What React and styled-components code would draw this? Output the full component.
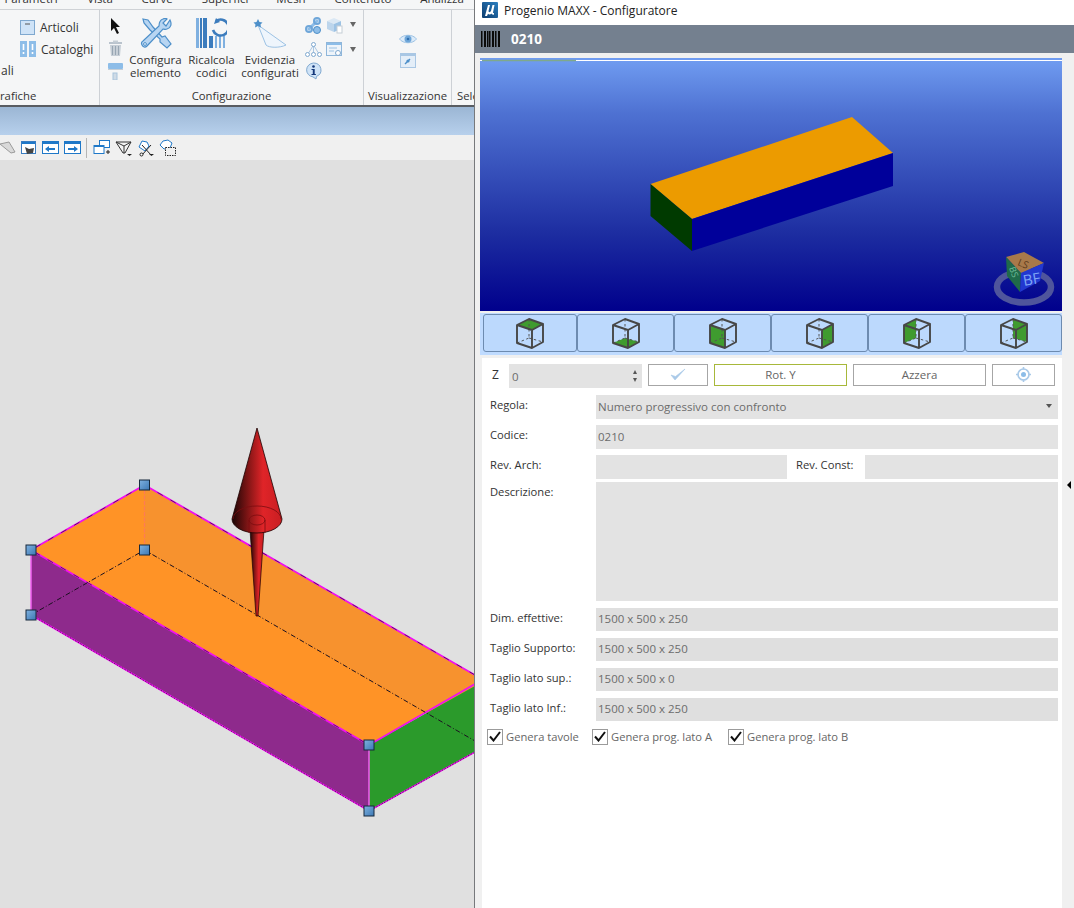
import React from 'react';
import styled, { createGlobalStyle } from 'styled-components';

const GlobalStyle = createGlobalStyle`
  html, body { margin: 0; padding: 0; background: #f0f0f0; }
  body { font-family: 'Open Sans', 'Liberation Sans', sans-serif; }
  * { box-sizing: border-box; }
`;

const Page = styled.div`
  display: flex;
  width: 1074px;
  height: 908px;
  overflow: hidden;
`;

/* ---------- left: CAD window ---------- */
const CadWindow = styled.div`
  width: 475px;
  height: 100%;
  display: flex;
  flex-direction: column;
  border-right: 1px solid #77797c;
  overflow: hidden;
`;

const MenuClip = styled.div`
  height: 10px;
  flex: none;
  overflow: hidden;
  background: #f5f6f7;
  border-bottom: 1px solid #cfd2d6;
`;

const Menu = styled.div`
  display: grid;
  grid-template-columns: 62px 76px 38px 98px 34px 110px 48px;
  margin-top: -9px;
  font-size: 11.5px;
  line-height: 16px;
  color: #333;
  text-align: center;
`;

const Ribbon = styled.div`
  height: 97px;
  flex: none;
  display: flex;
  background: #f5f6f7;
  border-bottom: 2px solid #585c62;
`;

const Group = styled.div`
  flex: none;
  width: ${(p) => p.$w}px;
  display: flex;
  flex-direction: column;
  border-right: 1px solid #cdd1d6;
`;

const GroupBody = styled.div`
  flex: 1;
  min-height: 0;
  display: flex;
  gap: ${(p) => p.$gap || 0}px;
  padding: ${(p) => p.$pad || '7px 0 0 8px'};
`;

const GroupLabel = styled.div`
  height: 17px;
  flex: none;
  padding-left: ${(p) => p.$left || 0}px;
  font-size: 11.3px;
  line-height: 15px;
  color: #333;
  text-align: ${(p) => p.$align || 'center'};
  white-space: nowrap;
  overflow: hidden;
`;

const CatalogList = styled.div`
  display: flex;
  flex-direction: column;
  font-size: 12px;
  color: #333;
  width: 100%;
`;

const CatalogRow = styled.div`
  height: 21.5px;
  display: flex;
  align-items: center;
  gap: 5px;
  padding-left: ${(p) => p.$left || 20}px;
`;

const ToolColumn = styled.div`
  width: 15px;
  flex: none;
  display: flex;
  flex-direction: column;
  gap: 5px;
`;

const BigButton = styled.div`
  width: ${(p) => p.$w}px;
  flex: none;
  display: flex;
  flex-direction: column;
  align-items: center;
  padding-top: 1px;
  font-size: 11.5px;
  line-height: 12.5px;
  color: #333;
  text-align: center;
  white-space: nowrap;

  svg { margin-bottom: 5px; }
`;

const SmallTools = styled.div`
  display: grid;
  grid-template-columns: 17px 17px 10px;
  grid-template-rows: 25px 20px 18px;
  column-gap: 4px;
  align-items: start;
`;

const SmallCaret = styled.span`
  justify-self: start;
  margin: 5px 0 0 3px;
  width: 0;
  height: 0;
  border-left: 3.5px solid transparent;
  border-right: 3.5px solid transparent;
  border-top: 5px solid #666;
`;

const ViewColumn = styled.div`
  width: 100%;
  display: flex;
  flex-direction: column;
  align-items: center;
  gap: 8px;
  padding-top: 23px;
`;

const BlueBand = styled.div`
  height: 28px;
  flex: none;
  background: linear-gradient(#9bb6d4, #b7d0ec);
`;

const ToolBar = styled.div`
  height: 25px;
  flex: none;
  display: flex;
  align-items: center;
  gap: 5px;
  background: #f0f0f0;
`;

const ToolSep = styled.span`
  width: 1px;
  height: 20px;
  margin-right: 1px;
  background: #b5b5b5;
`;

const Canvas = styled.div`
  flex: 1;
  min-height: 0;
  background: #e0e0e0;

  svg { display: block; }
`;

/* ---------- right: configurator ---------- */
const ConfigWindow = styled.div`
  flex: 1;
  min-width: 0;
  display: flex;
  flex-direction: column;
  background: #f0f0f0;
`;

const TitleBar = styled.div`
  height: 25px;
  flex: none;
  display: flex;
  align-items: center;
  gap: 6px;
  padding: 0 0 5px 7px;
  background: #fff;
  font-size: 12px;
  color: #222;
`;

const CodeBar = styled.div`
  height: 28px;
  flex: none;
  display: flex;
  align-items: center;
  gap: 10px;
  padding-left: 6px;
  background: #74808f;
  color: #fff;
  font-size: 13.5px;
  font-weight: 700;
`;

const ConfigBody = styled.div`
  flex: 1;
  min-height: 0;
  display: flex;
  padding-left: 5px;
`;

const MainColumn = styled.div`
  width: 582px;
  display: flex;
  flex-direction: column;
  padding-top: 5px;
`;

const Viewport = styled.div`
  height: 253px;
  flex: none;
  background: linear-gradient(#6f9bf0 1%, #4e71d2 22%, #1c2ca0 70%, #00008c 100%);

  svg { display: block; }
`;

const ViewButtons = styled.div`
  height: 42px;
  flex: none;
  margin-top: 2px;
  padding: 1px 1px 3px 3px;
  display: grid;
  grid-template-columns: 94px repeat(5, 97px);
  background: #bfdbff;
`;

const ViewButton = styled.div`
  display: flex;
  align-items: center;
  justify-content: center;
  border: 1px solid #6d8bb0;
  border-radius: 3px;
  background: #bcd9fd;
`;

const Form = styled.div`
  flex: 1;
  min-height: 0;
  margin: 3px 0 0 2px;
  padding: 6px 4px 0 8px;
  display: flex;
  flex-direction: column;
  background: #fff;
  font-size: 11px;
  color: #333;
`;

const FormRow = styled.div`
  display: grid;
  grid-template-columns: ${(p) => p.$cols || '106px 1fr'};
  margin-top: ${(p) => p.$top}px;
  height: ${(p) => p.$h}px;
`;

const TopRow = styled.div`
  display: flex;
  height: 24px;
`;

const ZLabel = styled.div`
  width: 19px;
  flex: none;
  padding: 2px 0 0 2px;
  font-size: 12px;
`;

const Field = styled.div`
  display: flex;
  align-items: ${(p) => (p.$tall ? 'flex-start' : 'center')};
  justify-content: space-between;
  padding: 0 3px 2px 2px;
  background: ${(p) => p.$bg || '#e3e3e3'};
  color: #6c6c6c;
  font-size: 11.5px;
  white-space: nowrap;
`;

const Spinner = styled(Field)`
  width: 133px;
  flex: none;
  padding: 0 5px 0 3px;
  margin-right: 6px;
`;

const SpinArrows = styled.span`
  display: flex;
  flex-direction: column;
  gap: 4px;

  i {
    width: 0;
    height: 0;
    border-left: 2.5px solid transparent;
    border-right: 2.5px solid transparent;
  }
  i:first-child { border-bottom: 4px solid #555; }
  i:last-child { border-top: 4px solid #555; }
`;

const ActionButton = styled.div`
  width: ${(p) => p.$w}px;
  flex: none;
  height: 22px;
  margin-right: 6px;
  padding-bottom: 1px;
  display: flex;
  align-items: center;
  justify-content: center;
  background: #fff;
  border: 1px solid ${(p) => (p.$active ? '#a7b83a' : '#a6a6a6')};
  color: #666;
  font-size: 11.5px;
`;

const SelectCaret = styled.span`
  margin-right: 3px;
  width: 0;
  height: 0;
  border-left: 3px solid transparent;
  border-right: 3px solid transparent;
  border-top: 4px solid #555;
`;

const Label = styled.div`
  padding: 1px 0 0 ${(p) => p.$left || 0}px;
  font-size: 11.2px;
  line-height: 18px;
  white-space: nowrap;
`;

const CheckRow = styled.div`
  display: flex;
  margin: 7px 0 0 -3px;
  height: 17px;
`;

const CheckItem = styled.div`
  width: ${(p) => p.$w}px;
  flex: none;
  display: flex;
  align-items: center;
  gap: 3px;
  color: #666;
  font-size: 11.2px;
  white-space: nowrap;
`;

const CheckBox = styled.span`
  width: 16px;
  height: 16px;
  flex: none;
  display: flex;
  align-items: center;
  justify-content: center;
  background: #fff;
  border: 1px solid #9b9b9b;
`;

const SideStrip = styled.div`
  flex: 1;
  padding: 428px 0 0 5px;
`;

const SplitterMark = styled.span`
  display: block;
  width: 0;
  height: 0;
  border-top: 4px solid transparent;
  border-bottom: 4px solid transparent;
  border-right: 4px solid #000;
`;

/* ---------- icons ---------- */
const IconSvg = styled.svg`
  flex: none;
`;

const Svg = ({ w, h, children }) => (
  <IconSvg width={w} height={h} viewBox={`0 0 ${w} ${h}`}>
    {children}
  </IconSvg>
);

const ArticoliIcon = () => (
  <Svg w={15} h={15}>
    <rect x="0.5" y="0.5" width="14" height="14" fill="#cfe3f7" stroke="#7fa8cf" />
    <path d="M5 4h5" stroke="#555" />
  </Svg>
);

const CataloghiIcon = () => (
  <Svg w={16} h={16}>
    <rect x="0" y="0" width="7" height="16" fill="#8dbde8" />
    <rect x="9" y="0" width="7" height="16" fill="#8dbde8" />
    <path d="M3.5 3v6M12.5 3v6" stroke="#fff" strokeWidth="1.6" />
    <path d="M3.5 11v2M12.5 11v2" stroke="#fff" strokeWidth="1.6" />
  </Svg>
);

const PointerIcon = () => (
  <Svg w={15} h={18}>
    <path d="M3 1l0 13 3-3 3 6 2-1-3-6h4z" fill="#111" />
  </Svg>
);

const TrashIcon = () => (
  <Svg w={15} h={17}>
    <rect x="1" y="2" width="13" height="2" fill="#b9c3cd" />
    <rect x="5" y="0.5" width="5" height="2" fill="#c5ced6" />
    <path d="M2 5h11l-1 11H3z" fill="#c6ced6" />
    <path d="M4.5 6v9M7.5 6v9M10.5 6v9" stroke="#98a6b3" />
  </Svg>
);

const RollerIcon = () => (
  <Svg w={15} h={18}>
    <rect x="0" y="1" width="15" height="6" rx="1" fill="#8dbde8" />
    <path d="M0 7h15v1H0z" fill="#c5ced6" />
    <rect x="5" y="11" width="4" height="7" fill="#cfdbe6" stroke="#a8c3dc" />
  </Svg>
);

const WrenchIcon = () => (
  <Svg w={32} h={31}>
    <path d="M3 1l5 1 5 7 9 10 3-1 6 8-4 4-7-6 0-3-10-9-6-7z" fill="#b7d5f2" stroke="#4d8fc9" strokeWidth="1.2" />
    <path d="M30 2c2 4 1 8-3 9-2 1-3 0-4 0L7 28c-2 2-4 1-5-1s-1-3 1-4l16-15c0-3 1-6 4-7 2-1 3-1 4 0l-4 4 3 3z" fill="#b7d5f2" stroke="#4d8fc9" strokeWidth="1.2" />
    <circle cx="5" cy="26" r="1.4" fill="#fff" stroke="#4d8fc9" />
  </Svg>
);

const RicalcolaIcon = () => (
  <Svg w={31} h={31}>
    <rect x="0" y="0" width="3" height="30" fill="#7fb0e0" />
    <rect x="4" y="0" width="2" height="30" fill="#3c7cbd" />
    <rect x="7" y="0" width="4" height="30" fill="#3c7cbd" />
    <rect x="13" y="18" width="4" height="12" fill="#3c7cbd" />
    <rect x="19" y="18" width="2" height="12" fill="#7fb0e0" />
    <rect x="23" y="18" width="2" height="12" fill="#7fb0e0" />
    <rect x="27" y="18" width="2" height="12" fill="#7fb0e0" />
    <path d="M15 12a8 8 0 1 0 3-9" fill="none" stroke="#3c7cbd" strokeWidth="2.6" transform="translate(2 0)" />
    <path d="M20 0l4 4-6 2z" fill="#3c7cbd" />
  </Svg>
);

const EvidenziaIcon = () => (
  <Svg w={34} h={31}>
    <path d="M5 7l28 20c-6 3-17 3-20 0z" fill="#eef5fc" stroke="#9cc2e4" />
    <path d="M5 1l1.500 3 3 .5-2 2 .5 3-3-1.500-3 1.500.5-3-2-2 3-.5z" fill="#4d8fc9" />
  </Svg>
);

const LinkIcon = () => (
  <Svg w={17} h={17}>
    <path d="M3 13L13 3" stroke="#8dbde8" strokeWidth="3" />
    <circle cx="4" cy="12" r="3" fill="none" stroke="#6ea6d9" strokeWidth="2" />
    <circle cx="12" cy="4" r="3" fill="none" stroke="#6ea6d9" strokeWidth="2" />
    <circle cx="12" cy="13" r="3.5" fill="#8dbde8" stroke="#4d8fc9" />
  </Svg>
);

const SolidIcon = () => (
  <Svg w={17} h={17}>
    <path d="M1 4l7-3 7 3-7 3z" fill="#dbe8f4" />
    <path d="M1 4l7 3v8l-7-3z" fill="#bcd5ec" />
    <path d="M8 7l7-3v8l-7 3z" fill="#9cc2e4" />
    <rect x="11" y="9" width="5" height="7" fill="#fff" stroke="#c5ced6" />
  </Svg>
);

const TreeIcon = () => (
  <Svg w={17} h={15}>
    <path d="M8.5 3L3 12M8.5 3v9M8.5 3L14 12" stroke="#a9c7e4" fill="none" />
    <circle cx="8.5" cy="2.5" r="2" fill="#fff" stroke="#7fa8cf" />
    <circle cx="2.5" cy="12.5" r="2" fill="#fff" stroke="#7fa8cf" />
    <circle cx="8.5" cy="12.5" r="2" fill="#fff" stroke="#7fa8cf" />
    <circle cx="14.5" cy="12.5" r="2" fill="#fff" stroke="#7fa8cf" />
  </Svg>
);

const FormIcon = () => (
  <Svg w={17} h={15}>
    <rect x="0.5" y="0.5" width="15" height="13" fill="#eef4fa" stroke="#8fb6da" />
    <rect x="1" y="1" width="14" height="2" fill="#8dbde8" />
    <path d="M3 6h8M3 9h5" stroke="#9cc2e4" />
    <circle cx="12" cy="11" r="2.5" fill="#fff" stroke="#7fa8cf" />
  </Svg>
);

const InfoIcon = () => (
  <Svg w={17} h={18}>
    <path d="M8.5 1a7.500 7 0 0 1 3 13.400L11 17l-3-2.100A7.500 7 0 0 1 8.500 1z" fill="#cfe3f7" stroke="#7fa8cf" />
    <circle cx="8.500" cy="4.500" r="1.300" fill="#14387a" />
    <path d="M6.500 7h3.200v5h1.200v1H6.500v-1h1.300V8H6.500z" fill="#14387a" />
  </Svg>
);

const EyeIcon = () => (
  <Svg w={18} h={12}>
    <path d="M0.500 6C4 1 14 1 17.500 6 14 11 4 11 0.500 6z" fill="#dcebf9" stroke="#9cc2e4" />
    <circle cx="9" cy="6" r="3.500" fill="#6ea6d9" />
    <circle cx="9" cy="6" r="1.300" fill="#2f6fb0" />
  </Svg>
);

const WindowIcon = () => (
  <Svg w={16} h={15}>
    <rect x="0.500" y="0.500" width="15" height="14" fill="#e4eef8" stroke="#a9c7e4" />
    <rect x="1" y="1" width="14" height="2" fill="#a9c7e4" />
    <path d="M5 11l5-5" stroke="#4d8fc9" strokeWidth="1.500" />
    <circle cx="8" cy="8" r="1.600" fill="#4d8fc9" />
  </Svg>
);

const PlaneIcon = () => (
  <Svg w={16} h={14}>
    <path d="M0 3l9-2 6 10-4 1z" fill="#d9d9d9" stroke="#9a9a9a" />
  </Svg>
);

const ViewWindowIcon = () => (
  <Svg w={16} h={16}>
    <rect x="0.500" y="1.500" width="14" height="12" fill="#fff" stroke="#3a7dc2" />
    <rect x="1" y="2" width="13" height="2" fill="#1f78c8" />
    <path d="M4 7l4 2 5-1-1 5-6 1z" fill="#444" />
  </Svg>
);

const StepIcon = ({ left }) => (
  <Svg w={17} h={13}>
    <rect x="0.500" y="0.500" width="16" height="12" fill="#fff" stroke="#1f78c8" />
    <rect x="1" y="1" width="15" height="2" fill="#1f78c8" />
    <path d={left ? 'M3 8l4-3v2h6v2H7v2z' : 'M14 8l-4-3v2H4v2h6v2z'} fill="#1f78c8" />
  </Svg>
);

const FramesIcon = () => (
  <Svg w={17} h={17}>
    <rect x="6.500" y="1.500" width="10" height="7" fill="#fff" stroke="#1f78c8" />
    <rect x="1" y="6.500" width="10" height="8" fill="#fff" stroke="#1f78c8" />
    <rect x="1" y="6" width="10" height="2" fill="#1f78c8" />
    <path d="M13 13h4M15 11v4" stroke="#222" />
  </Svg>
);

const FunnelIcon = () => (
  <Svg w={17} h={18}>
    <path d="M1 3l15 0-6 11-2 0z" fill="#f3f3f3" stroke="#333" />
    <path d="M1 3l8 4 7-4M9 7l0 7" fill="none" stroke="#333" />
    <path d="M12 15h5l-2.500 2z" fill="#222" />
  </Svg>
);

const CutIcon = () => (
  <Svg w={17} h={18}>
    <path d="M2 8l3-6 5 1 2 4-4 5z" fill="#fff" stroke="#1f78c8" />
    <path d="M5 16L14 6M14 16L5 6" stroke="#222" />
    <circle cx="4.500" cy="15.500" r="1.500" fill="#fff" stroke="#222" />
    <path d="M12 15h5l-2.500 2z" fill="#222" />
  </Svg>
);

const SelectBoxIcon = () => (
  <Svg w={17} h={18}>
    <path d="M1 6l3-4 5-1 4 3-2 5-6 1z" fill="#fff" stroke="#1f78c8" />
    <rect x="6.500" y="8.500" width="10" height="8" fill="#f0f0f0" stroke="#222" strokeDasharray="1.500 1" />
  </Svg>
);

const LogoIcon = () => (
  <IconSvg width="16" height="16" viewBox="0 0 16 16">
    <defs>
      <linearGradient id="logo" x1="0" y1="1" x2="1" y2="0">
        <stop offset="0" stopColor="#0d3c6e" />
        <stop offset="1" stopColor="#2b7fc0" />
      </linearGradient>
    </defs>
    <rect width="16" height="16" rx="1" fill="url(#logo)" />
    <path d="M3 14L6 3h2L6.500 9c0 1.500 1.800 1.500 2.500 0L10.500 3h2l-1.500 7.500c0 .7.500.7 1 .5v1.500c-1.200.5-2.300 0-2.500-1-1 1.200-2.700 1.200-3.500.3L5 14z" fill="#fff" />
  </IconSvg>
);

const BarcodeIcon = () => (
  <Svg w={20} h={16}>
    {[0, 3, 6, 8, 11, 14, 17].map((x) => (
      <rect key={x} x={x} y="0" width={x % 2 ? 2 : 1.500} height="16" fill="#0a0a0a" />
    ))}
  </Svg>
);

// cube corners used by the six view buttons
const C = {
  tl: '2,7', tb: '14,1', tr: '28,6', tf: '17,12',
  bl: '2,25', bf: '17,30', br: '28,24', bk: '14,20',
};
const FACES = {
  top: [C.tl, C.tb, C.tr, C.tf],
  bottom: [C.bl, C.bk, C.br, C.bf],
  front: [C.tl, C.tf, C.bf, C.bl],
  right: [C.tf, C.tr, C.br, C.bf],
  backLeft: [C.tl, C.tb, C.bk, C.bl],
  backRight: [C.tb, C.tr, C.br, C.bk],
};

const CubeIcon = ({ face }) => (
  <Svg w={30} h={31}>
    <polygon points={FACES[face].join(' ')} fill="#3f9b2f" />
    <path d="M14 1v19M2 25l12-5M14 20l14 4" fill="none" stroke="#555" strokeDasharray="2.500 2.500" />
    <path d="M2 7L14 1l14 5-11 6zM2 7v18l15 5 11-6V6M17 12v18" fill="none" stroke="#474747" strokeWidth="1.900" strokeLinejoin="round" />
  </Svg>
);

const TargetIcon = () => (
  <Svg w={15} h={15}>
    <circle cx="7.500" cy="7.500" r="5.500" fill="none" stroke="#a9c9e8" strokeWidth="1.600" />
    <circle cx="7.500" cy="7.500" r="2.500" fill="#8dbde8" />
    <path d="M7.500 0v2.500M7.500 12.500V15M0 7.500h2.500M12.500 7.500H15" stroke="#a9c9e8" strokeWidth="1.600" />
  </Svg>
);

const TickIcon = () => (
  <Svg w={16} h={13}>
    <path d="M1 7l4 5L15 1 5.500 8.500z" fill="#a9c9e8" stroke="#a9c9e8" strokeWidth="0.600" />
  </Svg>
);

const CheckMark = () => (
  <Svg w={12} h={11}>
    <path d="M1 5.500l3.500 4L11 1" fill="none" stroke="#111" strokeWidth="2" />
  </Svg>
);

/* ---------- drawings ---------- */
const Scene = () => (
  <svg width="582" height="253" viewBox="480 58 582 253">
    <path d="M480 60.500h582" stroke="#fff" />
    <path d="M482 60.500h94" stroke="#7fa98a" strokeWidth="1.500" />
    <polygon points="650.500,184 852,117 893,153 692,219" fill="#ec9b00" />
    <polygon points="692,219 893,153 893,186 692,251" fill="#00009a" />
    <polygon points="650.500,184 692,219 692,251 650.500,216" fill="#003a00" />
    <ellipse cx="1024" cy="287" rx="27" ry="15.500" fill="none" stroke="#4f559c" strokeWidth="6.500" />
    <polygon points="1006,257 1024,252 1044,263 1021,273" fill="#a8794a" />
    <polygon points="1006,257 1021,273 1020,292 1007,276" fill="#1f6a4a" />
    <polygon points="1021,273 1044,263 1040,281 1020,292" fill="#2238d0" />
    <text x="1024" y="286" fontSize="15" fill="#7fa5f5" fontFamily="'Open Sans', sans-serif" transform="rotate(-10 1024 286)">BF</text>
    <text x="1017" y="265" fontSize="10" fill="#5b3a1c" fontFamily="'Open Sans', sans-serif" transform="rotate(22 1017 265)">LS</text>
    <text x="1009" y="268" fontSize="9" fill="#6fbf9a" fontFamily="'Open Sans', sans-serif" transform="rotate(70 1009 268)">BS</text>
  </svg>
);

const Handle = ({ x, y }) => (
  <rect x={x - 5} y={y - 5} width="10" height="10" fill="url(#handle)" stroke="#16293d" />
);

const CadDrawing = () => (
  <svg width="474" height="748" viewBox="0 160 474 748">
    <defs>
      <linearGradient id="cone" x1="0" y1="0" x2="1" y2="0">
        <stop offset="0" stopColor="#1a0505" />
        <stop offset="0.3" stopColor="#7a1414" />
        <stop offset="0.62" stopColor="#e02428" />
        <stop offset="1" stopColor="#c81e22" />
      </linearGradient>
      <linearGradient id="handle" x1="0" y1="0" x2="1" y2="1">
        <stop offset="0" stopColor="#7fb2e0" />
        <stop offset="1" stopColor="#3c78b4" />
      </linearGradient>
    </defs>
    <polygon points="144.500,485 31,550 369,745 483,680" fill="#ff9326" />
    <polygon points="144.500,485 144.500,550 483,745 483,680" fill="#f7922e" />
    <polygon points="31,550 369,745 369,811 31,615" fill="#8e2a8c" />
    <polygon points="369,745 475,686 475,752 369,811" fill="#2b9a2b" />
    <path d="M144.500 485L31 550L369 745L475 684M144.500 485L475 675" fill="none" stroke="#f010f0" strokeWidth="1.800" />
    <path d="M144.500 485L31 550L369 745M144.500 485L475 675" fill="none" stroke="#2a1030" strokeWidth="0.700" strokeDasharray="6 9" />
    <path d="M31 550V615M369 745V811" stroke="#f060f0" strokeWidth="1.500" />
    <path d="M31 615L369 811L475 752" fill="none" stroke="#f010f0" strokeWidth="1.500" />
    <path d="M31 615L369 811L475 752" fill="none" stroke="#2a1030" strokeWidth="0.700" strokeDasharray="1.500 1.500" />
    <path d="M144.500 490V550" stroke="#ff7a55" strokeWidth="1.200" strokeDasharray="4 1.500" />
    <path d="M31 615L144.500 550L475 741" fill="none" stroke="#1a1020" strokeWidth="1" strokeDasharray="5 2 1 2" />
    <path d="M250 530L264 530L258 616H256z" fill="url(#cone)" stroke="#1a0000" strokeWidth="0.700" />
    <path d="M257 428L282 519A25 14 0 0 1 232 519z" fill="url(#cone)" stroke="#1a0000" strokeWidth="0.800" />
    <path d="M233 519A24 13 0 0 1 281 519" fill="none" stroke="#7a0d10" strokeWidth="0.800" />
    <ellipse cx="257" cy="520" rx="8" ry="5" fill="none" stroke="#7a0d10" strokeWidth="0.800" />
    <path d="M249 520V533M265 520V533" stroke="#7a0d10" strokeWidth="0.800" />
    {[[144.500, 485], [31, 550], [144.500, 550], [31, 615], [369, 745], [369, 811]].map(([x, y]) => (
      <Handle key={`${x}-${y}`} x={x} y={y} />
    ))}
  </svg>
);

/* ---------- data ---------- */
const dimensionRows = [
  ['Dim. effettive:', '1500 x 500 x 250'],
  ['Taglio Supporto:', '1500 x 500 x 250'],
  ['Taglio lato sup.:', '1500 x 500 x 0'],
  ['Taglio lato Inf.:', '1500 x 500 x 250'],
];

const cubeFaces = ['top', 'bottom', 'front', 'right', 'backLeft', 'backRight'];

const App = () => (
  <Page>
    <GlobalStyle />
    <CadWindow>
      <MenuClip>
        <Menu>
          <span>Parametri</span>
          <span>Vista</span>
          <span>Curve</span>
          <span>Superfici</span>
          <span>Mesh</span>
          <span>Contenuto</span>
          <span>Analizza</span>
        </Menu>
      </MenuClip>
      <Ribbon>
        <Group $w={100}>
          <GroupBody $pad="7px 0 0 0">
            <CatalogList>
              <CatalogRow><ArticoliIcon />Articoli</CatalogRow>
              <CatalogRow><CataloghiIcon />Cataloghi</CatalogRow>
              <CatalogRow $left={1}>ali</CatalogRow>
            </CatalogList>
          </GroupBody>
          <GroupLabel $align="left">rafiche</GroupLabel>
        </Group>
        <Group $w={264}>
          <GroupBody $gap={6}>
            <ToolColumn>
              <PointerIcon />
              <TrashIcon />
              <RollerIcon />
            </ToolColumn>
            <BigButton $w={53}><WrenchIcon />Configura<br />elemento</BigButton>
            <BigButton $w={47}><RicalcolaIcon />Ricalcola<br />codici</BigButton>
            <BigButton $w={58}><EvidenziaIcon />Evidenzia<br />configurati</BigButton>
            <SmallTools>
              <LinkIcon /><SolidIcon /><SmallCaret />
              <TreeIcon /><FormIcon /><SmallCaret />
              <InfoIcon />
            </SmallTools>
          </GroupBody>
          <GroupLabel>Configurazione</GroupLabel>
        </Group>
        <Group $w={88}>
          <GroupBody $pad="0">
            <ViewColumn>
              <EyeIcon />
              <WindowIcon />
            </ViewColumn>
          </GroupBody>
          <GroupLabel>Visualizzazione</GroupLabel>
        </Group>
        <Group $w={60}>
          <GroupBody />
          <GroupLabel $align="left" $left={5}>Selezione</GroupLabel>
        </Group>
      </Ribbon>
      <BlueBand />
      <ToolBar>
        <PlaneIcon />
        <ViewWindowIcon />
        <StepIcon left />
        <StepIcon />
        <ToolSep />
        <FramesIcon />
        <FunnelIcon />
        <CutIcon />
        <SelectBoxIcon />
      </ToolBar>
      <Canvas>
        <CadDrawing />
      </Canvas>
    </CadWindow>

    <ConfigWindow>
      <TitleBar>
        <LogoIcon />
        Progenio MAXX - Configuratore
      </TitleBar>
      <CodeBar>
        <BarcodeIcon />
        0210
      </CodeBar>
      <ConfigBody>
        <MainColumn>
          <Viewport>
            <Scene />
          </Viewport>
          <ViewButtons>
            {cubeFaces.map((face) => (
              <ViewButton key={face}>
                <CubeIcon face={face} />
              </ViewButton>
            ))}
          </ViewButtons>
          <Form>
            <TopRow>
              <ZLabel>Z</ZLabel>
              <Spinner>
                0
                <SpinArrows><i /><i /></SpinArrows>
              </Spinner>
              <ActionButton $w={60}><TickIcon /></ActionButton>
              <ActionButton $w={133} $active>Rot. Y</ActionButton>
              <ActionButton $w={133}>Azzera</ActionButton>
              <ActionButton $w={63}><TargetIcon /></ActionButton>
            </TopRow>
            <FormRow $top={7} $h={24}>
              <Label>Regola:</Label>
              <Field>Numero progressivo con confronto<SelectCaret /></Field>
            </FormRow>
            <FormRow $top={6} $h={24}>
              <Label>Codice:</Label>
              <Field>0210</Field>
            </FormRow>
            <FormRow $top={6} $h={24} $cols="106px 191px 78px 1fr">
              <Label>Rev. Arch:</Label>
              <Field />
              <Label $left={9}>Rev. Const:</Label>
              <Field />
            </FormRow>
            <FormRow $top={3} $h={119}>
              <Label>Descrizione:</Label>
              <Field $tall />
            </FormRow>
            {dimensionRows.map(([label, value]) => (
              <FormRow key={label} $top={7} $h={23}>
                <Label>{label}</Label>
                <Field $bg="#dfdfdf">{value}</Field>
              </FormRow>
            ))}
            <CheckRow>
              <CheckItem $w={105}><CheckBox><CheckMark /></CheckBox>Genera tavole</CheckItem>
              <CheckItem $w={136}><CheckBox><CheckMark /></CheckBox>Genera prog. lato A</CheckItem>
              <CheckItem $w={136}><CheckBox><CheckMark /></CheckBox>Genera prog. lato B</CheckItem>
            </CheckRow>
          </Form>
        </MainColumn>
        <SideStrip>
          <SplitterMark />
        </SideStrip>
      </ConfigBody>
    </ConfigWindow>
  </Page>
);

export default App;
